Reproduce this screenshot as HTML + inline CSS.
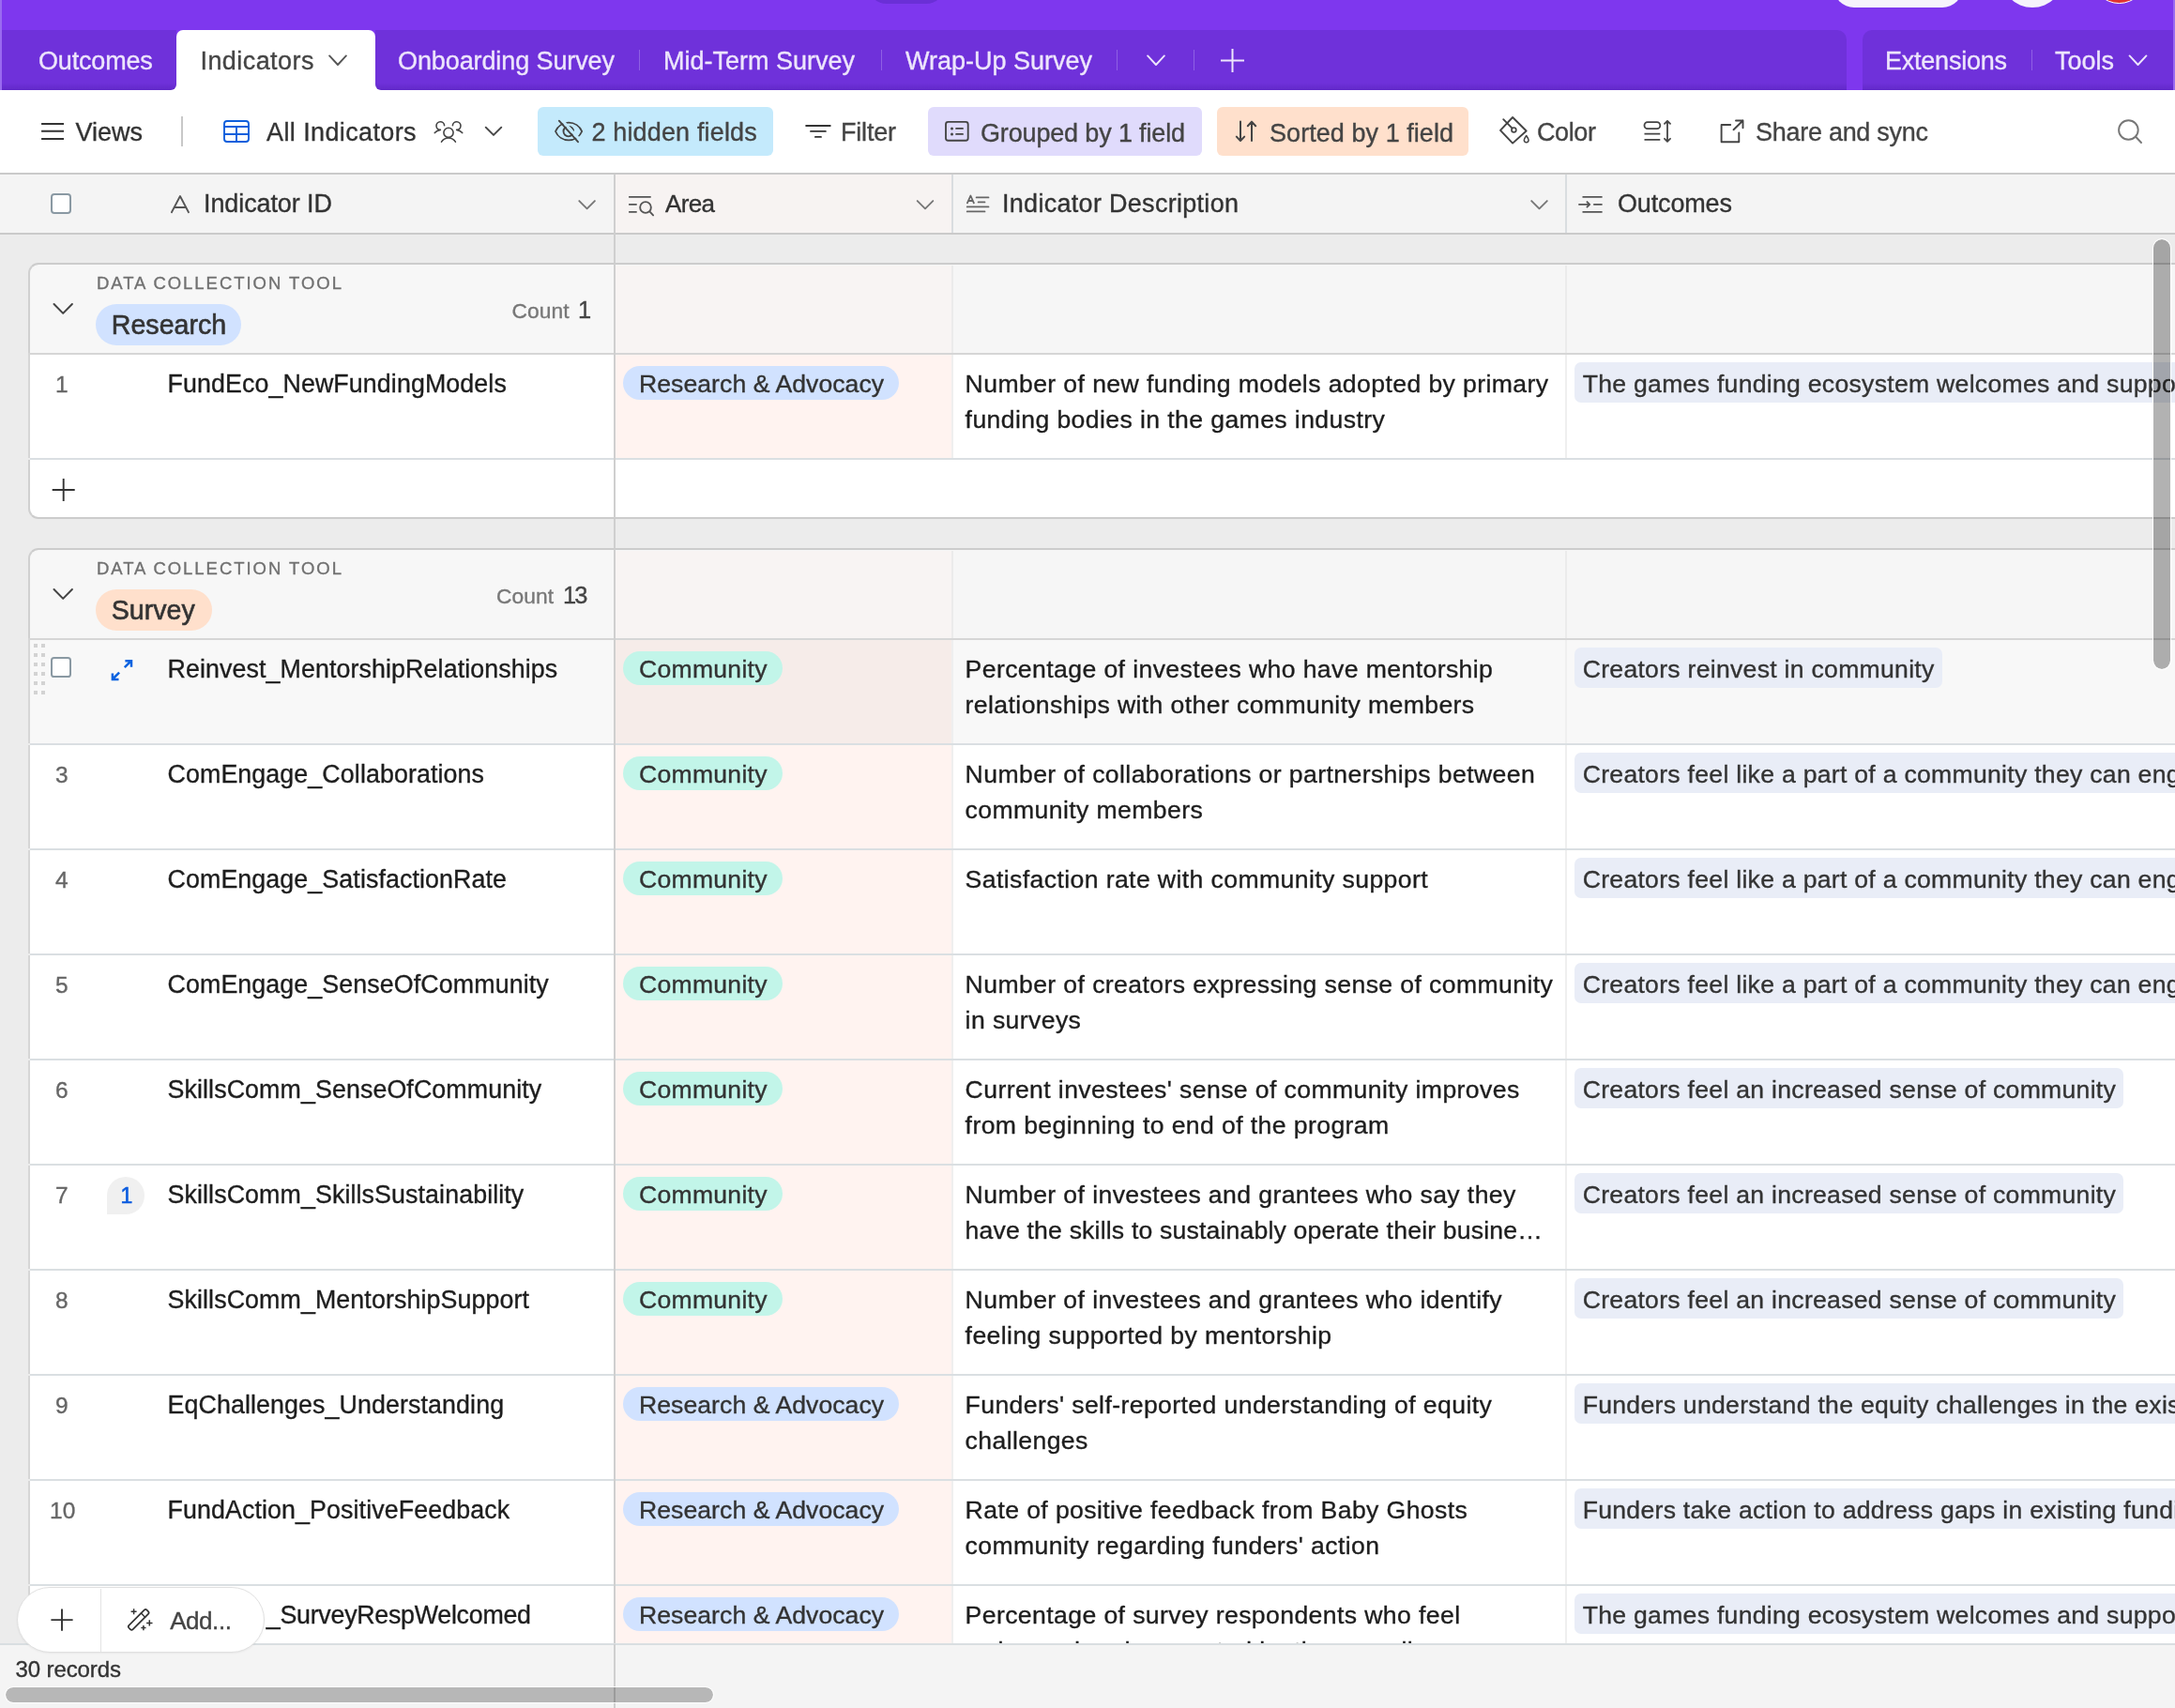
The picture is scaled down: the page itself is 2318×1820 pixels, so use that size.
<!DOCTYPE html><html><head><meta charset="utf-8"><style>
html,body{margin:0;padding:0;}
body{width:2318px;height:1820px;position:relative;overflow:hidden;background:#fff;font-family:"Liberation Sans",sans-serif;}
.t{position:absolute;white-space:nowrap;-webkit-text-stroke:0.35px currentColor;}
#wrap{position:absolute;left:0;top:0;width:2318px;height:1820px;will-change:transform;}
.r{position:absolute;}
</style></head><body><div id="wrap">
<div class="r" style="left:0px;top:0px;width:2318px;height:96px;background:#7e37ee;border-radius:0;"></div>
<div class="r" style="left:0px;top:0px;width:2px;height:96px;background:#9a6af0;border-radius:0;"></div>
<div class="r" style="left:2316px;top:0px;width:2px;height:96px;background:#9a6af0;border-radius:0;"></div>
<div class="r" style="left:925px;top:-40px;width:82px;height:43.5px;background:#6a2fd6;border-radius:20px;"></div>
<div class="r" style="left:1954px;top:-40px;width:138px;height:48px;background:#f6f3fc;border-radius:22px;"></div>
<div class="r" style="left:2131.75px;top:-60.5px;width:68.5px;height:68.5px;background:#f6f3fc;border-radius:50%;"></div>
<div class="r" style="left:2228.5px;top:-55.2px;width:59px;height:59px;background:#e0312f;border-radius:50%;border:1.6px solid #fff;box-sizing:border-box;"></div>
<div class="r" style="left:178px;top:80px;width:232px;height:16px;background:#fff;border-radius:0;"></div>
<div class="r" style="left:2px;top:32px;width:186px;height:64px;background:linear-gradient(to bottom, #6f31da 0, #6f31da 88%, #6128c8 100%);border-radius:0 0 6px 0;"></div>
<div class="r" style="left:400px;top:32px;width:1568px;height:64px;background:linear-gradient(to bottom, #6f31da 0, #6f31da 88%, #6128c8 100%);border-radius:0 10px 0 6px;"></div>
<div class="r" style="left:1985px;top:32px;width:331px;height:64px;background:linear-gradient(to bottom, #6f31da 0, #6f31da 88%, #6128c8 100%);border-radius:10px 0 0 0;"></div>
<div class="r" style="left:188px;top:32px;width:212px;height:65px;background:#fff;border-radius:7px 7px 0 0;"></div>
<div class="t" style="left:41.00px;top:48.00px;font-size:27px;line-height:35px;color:#ede5fc;letter-spacing:-0.181px;">Outcomes</div>
<div class="t" style="left:213.50px;top:48.00px;font-size:27px;line-height:35px;color:#444;letter-spacing:0.425px;">Indicators</div>
<div class="t" style="left:424.00px;top:48.00px;font-size:27px;line-height:35px;color:#ede5fc;letter-spacing:-0.102px;">Onboarding Survey</div>
<div class="r" style="left:680.5px;top:53px;width:1.6px;height:22px;background:#8f60e4;border-radius:0;"></div>
<div class="t" style="left:707.00px;top:48.00px;font-size:27px;line-height:35px;color:#ede5fc;letter-spacing:-0.001px;">Mid-Term Survey</div>
<div class="r" style="left:938.5px;top:53px;width:1.6px;height:22px;background:#8f60e4;border-radius:0;"></div>
<div class="t" style="left:965.00px;top:48.00px;font-size:27px;line-height:35px;color:#ede5fc;letter-spacing:-0.003px;">Wrap-Up Survey</div>
<div class="r" style="left:1189.5px;top:53px;width:1.6px;height:22px;background:#8f60e4;border-radius:0;"></div>
<div class="r" style="left:1271.5px;top:53px;width:1.6px;height:22px;background:#8f60e4;border-radius:0;"></div>
<div class="t" style="left:2009.00px;top:48.00px;font-size:27px;line-height:35px;color:#ede5fc;letter-spacing:-0.232px;">Extensions</div>
<div class="r" style="left:2164.5px;top:53px;width:1.6px;height:22px;background:#8f60e4;border-radius:0;"></div>
<div class="t" style="left:2190.00px;top:48.00px;font-size:27px;line-height:35px;color:#ede5fc;letter-spacing:-0.005px;">Tools</div>
<div class="t" style="left:80.50px;top:124.00px;font-size:27px;line-height:35px;color:#333;letter-spacing:-0.012px;">Views</div>
<div class="r" style="left:193.2px;top:124px;width:1.6px;height:32px;background:#c8c8c8;border-radius:0;"></div>
<div class="t" style="left:284.10px;top:124.00px;font-size:27px;line-height:35px;color:#333;letter-spacing:0.381px;">All Indicators</div>
<div class="r" style="left:573px;top:114px;width:251px;height:52px;background:#c4eafc;border-radius:6px;"></div>
<div class="t" style="left:630.40px;top:124.00px;font-size:27px;line-height:35px;color:#444;letter-spacing:0.161px;">2 hidden fields</div>
<div class="t" style="left:896.00px;top:124.00px;font-size:27px;line-height:35px;color:#444;letter-spacing:-0.199px;">Filter</div>
<div class="r" style="left:989px;top:114px;width:292px;height:52px;background:#e0dbfc;border-radius:6px;"></div>
<div class="t" style="left:1045.00px;top:124.50px;font-size:27px;line-height:35px;color:#444;letter-spacing:-0.156px;">Grouped by 1 field</div>
<div class="r" style="left:1297px;top:114px;width:268px;height:52px;background:#ffe0cc;border-radius:6px;"></div>
<div class="t" style="left:1353.00px;top:124.50px;font-size:27px;line-height:35px;color:#444;letter-spacing:0.056px;">Sorted by 1 field</div>
<div class="t" style="left:1638.00px;top:124.00px;font-size:27px;line-height:35px;color:#444;letter-spacing:-0.383px;">Color</div>
<div class="t" style="left:1871.00px;top:124.00px;font-size:27px;line-height:35px;color:#444;letter-spacing:-0.277px;">Share and sync</div>
<div class="r" style="left:0px;top:184px;width:2318px;height:2px;background:#cacaca;border-radius:0;"></div>
<div class="r" style="left:0px;top:186px;width:2318px;height:62px;background:#f4f4f4;border-radius:0;"></div>
<div class="r" style="left:656px;top:186px;width:359px;height:62px;background:#f7f3f2;border-radius:0;"></div>
<div class="r" style="left:0px;top:248px;width:2318px;height:2px;background:#cacaca;border-radius:0;"></div>
<div class="r" style="left:1014px;top:186px;width:2px;height:62px;background:#d9dde0;border-radius:0;"></div>
<div class="r" style="left:654px;top:186px;width:2px;height:64px;background:#cfcfcf;border-radius:0;"></div>
<div class="r" style="left:1668px;top:186px;width:2px;height:62px;background:#d9dde0;border-radius:0;"></div>
<div class="r" style="left:54.2px;top:206.4px;width:21.5px;height:21.5px;background:#fff;border-radius:4px;border:2px solid #8a99a3;box-sizing:border-box;"></div>
<div class="t" style="left:217.00px;top:200.30px;font-size:27px;line-height:35px;color:#333;letter-spacing:-0.098px;">Indicator ID</div>
<div class="t" style="left:709.00px;top:200.30px;font-size:26px;line-height:34px;color:#333;letter-spacing:-0.655px;">Area</div>
<div class="t" style="left:1068.00px;top:200.30px;font-size:27px;line-height:35px;color:#333;letter-spacing:0.293px;">Indicator Description</div>
<div class="t" style="left:1724.00px;top:200.30px;font-size:27px;line-height:35px;color:#333;letter-spacing:-0.152px;">Outcomes</div>
<div class="r" style="left:0px;top:250px;width:2318px;height:1502px;background:#ececec;border-radius:0;"></div>
<div class="r" style="left:654px;top:250px;width:2px;height:1502px;background:#cfcfcf;border-radius:0;"></div>
<div class="r" style="left:30px;top:280px;width:626px;height:97px;background:#f7f7f7;border-radius:11px 0 0 0;border-top:2px solid #cccccc;border-left:2px solid #d0d0d0;box-sizing:border-box;"></div>
<div class="r" style="left:656px;top:280px;width:1662px;height:97px;background:#f6f6f6;border-radius:0;border-top:2px solid #cccccc;box-sizing:border-box;"></div>
<div class="r" style="left:656px;top:283px;width:359px;height:94px;background:#f8f4f3;border-radius:0;"></div>
<div class="r" style="left:1014px;top:283px;width:2px;height:94px;background:#ebebeb;border-radius:0;"></div>
<div class="r" style="left:1668px;top:283px;width:2px;height:94px;background:#ebebeb;border-radius:0;"></div>
<div class="r" style="left:30px;top:376px;width:2288px;height:2px;background:#d6d6d6;border-radius:0;"></div>
<div class="r" style="left:654px;top:281px;width:2px;height:96px;background:#cfcfcf;border-radius:0;"></div>
<div class="t" style="left:102.90px;top:290.00px;font-size:18.5px;line-height:24px;color:#707070;letter-spacing:1.964px;">DATA COLLECTION TOOL</div>
<div class="r" style="left:102px;top:324px;width:155px;height:44px;background:#d1e2ff;border-radius:22px;"></div>
<div class="t" style="left:118.80px;top:328.00px;font-size:28.6px;line-height:37px;color:#333;-webkit-text-stroke:0.6px #333;">Research</div>
<div class="t" style="left:545.50px;top:316.00px;font-size:22.8px;line-height:30px;color:#777;letter-spacing:0.092px;">Count</div>
<div class="t" style="left:616.00px;top:314.00px;font-size:25.5px;line-height:33px;color:#444;letter-spacing:0.000px;">1</div>
<div class="r" style="left:30px;top:378px;width:624px;height:110px;background:#fff;border-radius:0;border-left:2px solid #d6d6d6;box-sizing:border-box;"></div>
<div class="r" style="left:656px;top:378px;width:1662px;height:110px;background:#fff;border-radius:0;"></div>
<div class="r" style="left:656px;top:378px;width:358px;height:110px;background:#fff3f0;border-radius:0;"></div>
<div class="r" style="left:1014px;top:378px;width:2px;height:110px;background:#efefef;border-radius:0;"></div>
<div class="r" style="left:1668px;top:378px;width:2px;height:110px;background:#efefef;border-radius:0;"></div>
<div class="r" style="left:32px;top:488px;width:2286px;height:2px;background:#dadfe2;border-radius:0;"></div>
<div class="r" style="left:654px;top:377px;width:2px;height:113px;background:#cfcfcf;border-radius:0;"></div>
<div class="t" style="left:59.00px;top:393.60px;font-size:24.5px;line-height:32px;color:#666;">1</div>
<div class="t" style="left:178.50px;top:391.60px;font-size:26.8px;line-height:35px;color:#1d1d1d;letter-spacing:0.100px;">FundEco_NewFundingModels</div>
<div class="r" style="left:664px;top:390px;width:294px;height:36px;background:#d1e2ff;border-radius:18px;"></div>
<div class="t" style="left:681.00px;top:391.60px;font-size:26.6px;line-height:35px;color:#333;letter-spacing:0.050px;">Research & Advocacy</div>
<div class="t" style="left:1028.60px;top:391.60px;font-size:26.6px;line-height:35px;color:#1d1d1d;letter-spacing:0.400px;">Number of new funding models adopted by primary</div>
<div class="t" style="left:1028.60px;top:429.60px;font-size:26.6px;line-height:35px;color:#1d1d1d;letter-spacing:0.400px;">funding bodies in the games industry</div>
<div class="r" style="left:1678.2px;top:386.4px;width:700px;height:43px;background:#e9edf7;border-radius:7px;"></div>
<div class="t" style="left:1686.70px;top:391.60px;font-size:26.6px;line-height:35px;color:#333;letter-spacing:0.280px;">The games funding ecosystem welcomes and supports</div>
<div class="r" style="left:30px;top:490px;width:2288px;height:63px;background:#fff;border-radius:0 0 0 11px;border-left:2px solid #d0d0d0;border-bottom:2px solid #cccccc;box-sizing:border-box;"></div>
<div class="r" style="left:654px;top:489px;width:2px;height:63px;background:#cfcfcf;border-radius:0;"></div>
<div class="r" style="left:30px;top:584px;width:626px;height:97px;background:#f7f7f7;border-radius:11px 0 0 0;border-top:2px solid #cccccc;border-left:2px solid #d0d0d0;box-sizing:border-box;"></div>
<div class="r" style="left:656px;top:584px;width:1662px;height:97px;background:#f6f6f6;border-radius:0;border-top:2px solid #cccccc;box-sizing:border-box;"></div>
<div class="r" style="left:656px;top:587px;width:359px;height:94px;background:#f8f4f3;border-radius:0;"></div>
<div class="r" style="left:1014px;top:587px;width:2px;height:94px;background:#ebebeb;border-radius:0;"></div>
<div class="r" style="left:1668px;top:587px;width:2px;height:94px;background:#ebebeb;border-radius:0;"></div>
<div class="r" style="left:30px;top:680px;width:2288px;height:2px;background:#d6d6d6;border-radius:0;"></div>
<div class="r" style="left:654px;top:585px;width:2px;height:96px;background:#cfcfcf;border-radius:0;"></div>
<div class="t" style="left:102.90px;top:594.00px;font-size:18.5px;line-height:24px;color:#707070;letter-spacing:1.964px;">DATA COLLECTION TOOL</div>
<div class="r" style="left:102px;top:628px;width:124px;height:44px;background:#ffe0cc;border-radius:22px;"></div>
<div class="t" style="left:118.80px;top:632.00px;font-size:28.6px;line-height:37px;color:#333;-webkit-text-stroke:0.6px #333;">Survey</div>
<div class="t" style="left:529.00px;top:620.00px;font-size:22.8px;line-height:30px;color:#777;letter-spacing:0.092px;">Count</div>
<div class="t" style="left:599.90px;top:618.00px;font-size:25.5px;line-height:33px;color:#444;letter-spacing:-1.856px;">13</div>
<div class="r" style="left:30px;top:682px;width:624px;height:110px;background:#f8f8f8;border-radius:0;border-left:2px solid #d6d6d6;box-sizing:border-box;"></div>
<div class="r" style="left:656px;top:682px;width:1662px;height:110px;background:#f8f8f8;border-radius:0;"></div>
<div class="r" style="left:656px;top:682px;width:358px;height:110px;background:#f6ece9;border-radius:0;"></div>
<div class="r" style="left:1014px;top:682px;width:2px;height:110px;background:#efefef;border-radius:0;"></div>
<div class="r" style="left:1668px;top:682px;width:2px;height:110px;background:#efefef;border-radius:0;"></div>
<div class="r" style="left:32px;top:792px;width:2286px;height:2px;background:#dadfe2;border-radius:0;"></div>
<div class="r" style="left:654px;top:681px;width:2px;height:113px;background:#cfcfcf;border-radius:0;"></div>
<div class="r" style="left:36px;top:686px;width:4px;height:4px;background:#d3d3d3;border-radius:0;"></div>
<div class="r" style="left:36px;top:696px;width:4px;height:4px;background:#d3d3d3;border-radius:0;"></div>
<div class="r" style="left:36px;top:706px;width:4px;height:4px;background:#d3d3d3;border-radius:0;"></div>
<div class="r" style="left:36px;top:716px;width:4px;height:4px;background:#d3d3d3;border-radius:0;"></div>
<div class="r" style="left:36px;top:726px;width:4px;height:4px;background:#d3d3d3;border-radius:0;"></div>
<div class="r" style="left:36px;top:736px;width:4px;height:4px;background:#d3d3d3;border-radius:0;"></div>
<div class="r" style="left:44px;top:686px;width:4px;height:4px;background:#d3d3d3;border-radius:0;"></div>
<div class="r" style="left:44px;top:696px;width:4px;height:4px;background:#d3d3d3;border-radius:0;"></div>
<div class="r" style="left:44px;top:706px;width:4px;height:4px;background:#d3d3d3;border-radius:0;"></div>
<div class="r" style="left:44px;top:716px;width:4px;height:4px;background:#d3d3d3;border-radius:0;"></div>
<div class="r" style="left:44px;top:726px;width:4px;height:4px;background:#d3d3d3;border-radius:0;"></div>
<div class="r" style="left:44px;top:736px;width:4px;height:4px;background:#d3d3d3;border-radius:0;"></div>
<div class="r" style="left:54.2px;top:700.2px;width:21.5px;height:21.5px;background:#fff;border-radius:3.6px;border:2px solid #8a99a3;box-sizing:border-box;"></div>
<div class="t" style="left:178.50px;top:695.60px;font-size:26.8px;line-height:35px;color:#1d1d1d;letter-spacing:0.100px;">Reinvest_MentorshipRelationships</div>
<div class="r" style="left:664px;top:694px;width:170px;height:36px;background:#c2f5e9;border-radius:18px;"></div>
<div class="t" style="left:681.00px;top:695.60px;font-size:26.6px;line-height:35px;color:#333;letter-spacing:0.250px;">Community</div>
<div class="t" style="left:1028.60px;top:695.60px;font-size:26.6px;line-height:35px;color:#1d1d1d;letter-spacing:0.400px;">Percentage of investees who have mentorship</div>
<div class="t" style="left:1028.60px;top:733.60px;font-size:26.6px;line-height:35px;color:#1d1d1d;letter-spacing:0.400px;">relationships with other community members</div>
<div class="r" style="left:1678.2px;top:690.4px;width:392px;height:43px;background:#e9edf7;border-radius:7px;"></div>
<div class="t" style="left:1686.70px;top:695.60px;font-size:26.6px;line-height:35px;color:#333;letter-spacing:0.280px;">Creators reinvest in community</div>
<div class="r" style="left:30px;top:794px;width:624px;height:110px;background:#fff;border-radius:0;border-left:2px solid #d6d6d6;box-sizing:border-box;"></div>
<div class="r" style="left:656px;top:794px;width:1662px;height:110px;background:#fff;border-radius:0;"></div>
<div class="r" style="left:656px;top:794px;width:358px;height:110px;background:#fff3f0;border-radius:0;"></div>
<div class="r" style="left:1014px;top:794px;width:2px;height:110px;background:#efefef;border-radius:0;"></div>
<div class="r" style="left:1668px;top:794px;width:2px;height:110px;background:#efefef;border-radius:0;"></div>
<div class="r" style="left:32px;top:904px;width:2286px;height:2px;background:#dadfe2;border-radius:0;"></div>
<div class="r" style="left:654px;top:793px;width:2px;height:113px;background:#cfcfcf;border-radius:0;"></div>
<div class="t" style="left:59.00px;top:809.60px;font-size:24.5px;line-height:32px;color:#666;">3</div>
<div class="t" style="left:178.50px;top:807.60px;font-size:26.8px;line-height:35px;color:#1d1d1d;letter-spacing:0.100px;">ComEngage_Collaborations</div>
<div class="r" style="left:664px;top:806px;width:170px;height:36px;background:#c2f5e9;border-radius:18px;"></div>
<div class="t" style="left:681.00px;top:807.60px;font-size:26.6px;line-height:35px;color:#333;letter-spacing:0.250px;">Community</div>
<div class="t" style="left:1028.60px;top:807.60px;font-size:26.6px;line-height:35px;color:#1d1d1d;letter-spacing:0.400px;">Number of collaborations or partnerships between</div>
<div class="t" style="left:1028.60px;top:845.60px;font-size:26.6px;line-height:35px;color:#1d1d1d;letter-spacing:0.400px;">community members</div>
<div class="r" style="left:1678.2px;top:802.4px;width:700px;height:43px;background:#e9edf7;border-radius:7px;"></div>
<div class="t" style="left:1686.70px;top:807.60px;font-size:26.6px;line-height:35px;color:#333;letter-spacing:0.280px;">Creators feel like a part of a community they can engage</div>
<div class="r" style="left:30px;top:906px;width:624px;height:110px;background:#fff;border-radius:0;border-left:2px solid #d6d6d6;box-sizing:border-box;"></div>
<div class="r" style="left:656px;top:906px;width:1662px;height:110px;background:#fff;border-radius:0;"></div>
<div class="r" style="left:656px;top:906px;width:358px;height:110px;background:#fff3f0;border-radius:0;"></div>
<div class="r" style="left:1014px;top:906px;width:2px;height:110px;background:#efefef;border-radius:0;"></div>
<div class="r" style="left:1668px;top:906px;width:2px;height:110px;background:#efefef;border-radius:0;"></div>
<div class="r" style="left:32px;top:1016px;width:2286px;height:2px;background:#dadfe2;border-radius:0;"></div>
<div class="r" style="left:654px;top:905px;width:2px;height:113px;background:#cfcfcf;border-radius:0;"></div>
<div class="t" style="left:59.00px;top:921.60px;font-size:24.5px;line-height:32px;color:#666;">4</div>
<div class="t" style="left:178.50px;top:919.60px;font-size:26.8px;line-height:35px;color:#1d1d1d;letter-spacing:0.100px;">ComEngage_SatisfactionRate</div>
<div class="r" style="left:664px;top:918px;width:170px;height:36px;background:#c2f5e9;border-radius:18px;"></div>
<div class="t" style="left:681.00px;top:919.60px;font-size:26.6px;line-height:35px;color:#333;letter-spacing:0.250px;">Community</div>
<div class="t" style="left:1028.60px;top:919.60px;font-size:26.6px;line-height:35px;color:#1d1d1d;letter-spacing:0.400px;">Satisfaction rate with community support</div>
<div class="r" style="left:1678.2px;top:914.4px;width:700px;height:43px;background:#e9edf7;border-radius:7px;"></div>
<div class="t" style="left:1686.70px;top:919.60px;font-size:26.6px;line-height:35px;color:#333;letter-spacing:0.280px;">Creators feel like a part of a community they can engage</div>
<div class="r" style="left:30px;top:1018px;width:624px;height:110px;background:#fff;border-radius:0;border-left:2px solid #d6d6d6;box-sizing:border-box;"></div>
<div class="r" style="left:656px;top:1018px;width:1662px;height:110px;background:#fff;border-radius:0;"></div>
<div class="r" style="left:656px;top:1018px;width:358px;height:110px;background:#fff3f0;border-radius:0;"></div>
<div class="r" style="left:1014px;top:1018px;width:2px;height:110px;background:#efefef;border-radius:0;"></div>
<div class="r" style="left:1668px;top:1018px;width:2px;height:110px;background:#efefef;border-radius:0;"></div>
<div class="r" style="left:32px;top:1128px;width:2286px;height:2px;background:#dadfe2;border-radius:0;"></div>
<div class="r" style="left:654px;top:1017px;width:2px;height:113px;background:#cfcfcf;border-radius:0;"></div>
<div class="t" style="left:59.00px;top:1033.60px;font-size:24.5px;line-height:32px;color:#666;">5</div>
<div class="t" style="left:178.50px;top:1031.60px;font-size:26.8px;line-height:35px;color:#1d1d1d;letter-spacing:0.100px;">ComEngage_SenseOfCommunity</div>
<div class="r" style="left:664px;top:1030px;width:170px;height:36px;background:#c2f5e9;border-radius:18px;"></div>
<div class="t" style="left:681.00px;top:1031.60px;font-size:26.6px;line-height:35px;color:#333;letter-spacing:0.250px;">Community</div>
<div class="t" style="left:1028.60px;top:1031.60px;font-size:26.6px;line-height:35px;color:#1d1d1d;letter-spacing:0.400px;">Number of creators expressing sense of community</div>
<div class="t" style="left:1028.60px;top:1069.60px;font-size:26.6px;line-height:35px;color:#1d1d1d;letter-spacing:0.400px;">in surveys</div>
<div class="r" style="left:1678.2px;top:1026.4px;width:700px;height:43px;background:#e9edf7;border-radius:7px;"></div>
<div class="t" style="left:1686.70px;top:1031.60px;font-size:26.6px;line-height:35px;color:#333;letter-spacing:0.280px;">Creators feel like a part of a community they can engage</div>
<div class="r" style="left:30px;top:1130px;width:624px;height:110px;background:#fff;border-radius:0;border-left:2px solid #d6d6d6;box-sizing:border-box;"></div>
<div class="r" style="left:656px;top:1130px;width:1662px;height:110px;background:#fff;border-radius:0;"></div>
<div class="r" style="left:656px;top:1130px;width:358px;height:110px;background:#fff3f0;border-radius:0;"></div>
<div class="r" style="left:1014px;top:1130px;width:2px;height:110px;background:#efefef;border-radius:0;"></div>
<div class="r" style="left:1668px;top:1130px;width:2px;height:110px;background:#efefef;border-radius:0;"></div>
<div class="r" style="left:32px;top:1240px;width:2286px;height:2px;background:#dadfe2;border-radius:0;"></div>
<div class="r" style="left:654px;top:1129px;width:2px;height:113px;background:#cfcfcf;border-radius:0;"></div>
<div class="t" style="left:59.00px;top:1145.60px;font-size:24.5px;line-height:32px;color:#666;">6</div>
<div class="t" style="left:178.50px;top:1143.60px;font-size:26.8px;line-height:35px;color:#1d1d1d;letter-spacing:0.100px;">SkillsComm_SenseOfCommunity</div>
<div class="r" style="left:664px;top:1142px;width:170px;height:36px;background:#c2f5e9;border-radius:18px;"></div>
<div class="t" style="left:681.00px;top:1143.60px;font-size:26.6px;line-height:35px;color:#333;letter-spacing:0.250px;">Community</div>
<div class="t" style="left:1028.60px;top:1143.60px;font-size:26.6px;line-height:35px;color:#1d1d1d;letter-spacing:0.400px;">Current investees' sense of community improves</div>
<div class="t" style="left:1028.60px;top:1181.60px;font-size:26.6px;line-height:35px;color:#1d1d1d;letter-spacing:0.400px;">from beginning to end of the program</div>
<div class="r" style="left:1678.2px;top:1138.4px;width:585px;height:43px;background:#e9edf7;border-radius:7px;"></div>
<div class="t" style="left:1686.70px;top:1143.60px;font-size:26.6px;line-height:35px;color:#333;letter-spacing:0.280px;">Creators feel an increased sense of community</div>
<div class="r" style="left:30px;top:1242px;width:624px;height:110px;background:#fff;border-radius:0;border-left:2px solid #d6d6d6;box-sizing:border-box;"></div>
<div class="r" style="left:656px;top:1242px;width:1662px;height:110px;background:#fff;border-radius:0;"></div>
<div class="r" style="left:656px;top:1242px;width:358px;height:110px;background:#fff3f0;border-radius:0;"></div>
<div class="r" style="left:1014px;top:1242px;width:2px;height:110px;background:#efefef;border-radius:0;"></div>
<div class="r" style="left:1668px;top:1242px;width:2px;height:110px;background:#efefef;border-radius:0;"></div>
<div class="r" style="left:32px;top:1352px;width:2286px;height:2px;background:#dadfe2;border-radius:0;"></div>
<div class="r" style="left:654px;top:1241px;width:2px;height:113px;background:#cfcfcf;border-radius:0;"></div>
<div class="t" style="left:59.00px;top:1257.60px;font-size:24.5px;line-height:32px;color:#666;">7</div>
<div class="r" style="left:114px;top:1253.8px;width:39.7px;height:40px;background:#f0f0f0;border-radius:20px 20px 20px 0;"></div>
<div class="t" style="left:128.50px;top:1259.00px;font-size:23px;line-height:30px;color:#0b5cdf;-webkit-text-stroke:0.6px #0b5cdf;">1</div>
<div class="t" style="left:178.50px;top:1255.60px;font-size:26.8px;line-height:35px;color:#1d1d1d;letter-spacing:0.100px;">SkillsComm_SkillsSustainability</div>
<div class="r" style="left:664px;top:1254px;width:170px;height:36px;background:#c2f5e9;border-radius:18px;"></div>
<div class="t" style="left:681.00px;top:1255.60px;font-size:26.6px;line-height:35px;color:#333;letter-spacing:0.250px;">Community</div>
<div class="t" style="left:1028.60px;top:1255.60px;font-size:26.6px;line-height:35px;color:#1d1d1d;letter-spacing:0.400px;">Number of investees and grantees who say they</div>
<div class="t" style="left:1028.60px;top:1293.60px;font-size:26.6px;line-height:35px;color:#1d1d1d;letter-spacing:0.180px;">have the skills to sustainably operate their busine…</div>
<div class="r" style="left:1678.2px;top:1250.4px;width:585px;height:43px;background:#e9edf7;border-radius:7px;"></div>
<div class="t" style="left:1686.70px;top:1255.60px;font-size:26.6px;line-height:35px;color:#333;letter-spacing:0.280px;">Creators feel an increased sense of community</div>
<div class="r" style="left:30px;top:1354px;width:624px;height:110px;background:#fff;border-radius:0;border-left:2px solid #d6d6d6;box-sizing:border-box;"></div>
<div class="r" style="left:656px;top:1354px;width:1662px;height:110px;background:#fff;border-radius:0;"></div>
<div class="r" style="left:656px;top:1354px;width:358px;height:110px;background:#fff3f0;border-radius:0;"></div>
<div class="r" style="left:1014px;top:1354px;width:2px;height:110px;background:#efefef;border-radius:0;"></div>
<div class="r" style="left:1668px;top:1354px;width:2px;height:110px;background:#efefef;border-radius:0;"></div>
<div class="r" style="left:32px;top:1464px;width:2286px;height:2px;background:#dadfe2;border-radius:0;"></div>
<div class="r" style="left:654px;top:1353px;width:2px;height:113px;background:#cfcfcf;border-radius:0;"></div>
<div class="t" style="left:59.00px;top:1369.60px;font-size:24.5px;line-height:32px;color:#666;">8</div>
<div class="t" style="left:178.50px;top:1367.60px;font-size:26.8px;line-height:35px;color:#1d1d1d;letter-spacing:0.100px;">SkillsComm_MentorshipSupport</div>
<div class="r" style="left:664px;top:1366px;width:170px;height:36px;background:#c2f5e9;border-radius:18px;"></div>
<div class="t" style="left:681.00px;top:1367.60px;font-size:26.6px;line-height:35px;color:#333;letter-spacing:0.250px;">Community</div>
<div class="t" style="left:1028.60px;top:1367.60px;font-size:26.6px;line-height:35px;color:#1d1d1d;letter-spacing:0.400px;">Number of investees and grantees who identify</div>
<div class="t" style="left:1028.60px;top:1405.60px;font-size:26.6px;line-height:35px;color:#1d1d1d;letter-spacing:0.400px;">feeling supported by mentorship</div>
<div class="r" style="left:1678.2px;top:1362.4px;width:585px;height:43px;background:#e9edf7;border-radius:7px;"></div>
<div class="t" style="left:1686.70px;top:1367.60px;font-size:26.6px;line-height:35px;color:#333;letter-spacing:0.280px;">Creators feel an increased sense of community</div>
<div class="r" style="left:30px;top:1466px;width:624px;height:110px;background:#fff;border-radius:0;border-left:2px solid #d6d6d6;box-sizing:border-box;"></div>
<div class="r" style="left:656px;top:1466px;width:1662px;height:110px;background:#fff;border-radius:0;"></div>
<div class="r" style="left:656px;top:1466px;width:358px;height:110px;background:#fff3f0;border-radius:0;"></div>
<div class="r" style="left:1014px;top:1466px;width:2px;height:110px;background:#efefef;border-radius:0;"></div>
<div class="r" style="left:1668px;top:1466px;width:2px;height:110px;background:#efefef;border-radius:0;"></div>
<div class="r" style="left:32px;top:1576px;width:2286px;height:2px;background:#dadfe2;border-radius:0;"></div>
<div class="r" style="left:654px;top:1465px;width:2px;height:113px;background:#cfcfcf;border-radius:0;"></div>
<div class="t" style="left:59.00px;top:1481.60px;font-size:24.5px;line-height:32px;color:#666;">9</div>
<div class="t" style="left:178.50px;top:1479.60px;font-size:26.8px;line-height:35px;color:#1d1d1d;letter-spacing:0.100px;">EqChallenges_Understanding</div>
<div class="r" style="left:664px;top:1478px;width:294px;height:36px;background:#d1e2ff;border-radius:18px;"></div>
<div class="t" style="left:681.00px;top:1479.60px;font-size:26.6px;line-height:35px;color:#333;letter-spacing:0.050px;">Research & Advocacy</div>
<div class="t" style="left:1028.60px;top:1479.60px;font-size:26.6px;line-height:35px;color:#1d1d1d;letter-spacing:0.400px;">Funders' self-reported understanding of equity</div>
<div class="t" style="left:1028.60px;top:1517.60px;font-size:26.6px;line-height:35px;color:#1d1d1d;letter-spacing:0.400px;">challenges</div>
<div class="r" style="left:1678.2px;top:1474.4px;width:700px;height:43px;background:#e9edf7;border-radius:7px;"></div>
<div class="t" style="left:1686.70px;top:1479.60px;font-size:26.6px;line-height:35px;color:#333;letter-spacing:0.280px;">Funders understand the equity challenges in the existing</div>
<div class="r" style="left:30px;top:1578px;width:624px;height:110px;background:#fff;border-radius:0;border-left:2px solid #d6d6d6;box-sizing:border-box;"></div>
<div class="r" style="left:656px;top:1578px;width:1662px;height:110px;background:#fff;border-radius:0;"></div>
<div class="r" style="left:656px;top:1578px;width:358px;height:110px;background:#fff3f0;border-radius:0;"></div>
<div class="r" style="left:1014px;top:1578px;width:2px;height:110px;background:#efefef;border-radius:0;"></div>
<div class="r" style="left:1668px;top:1578px;width:2px;height:110px;background:#efefef;border-radius:0;"></div>
<div class="r" style="left:32px;top:1688px;width:2286px;height:2px;background:#dadfe2;border-radius:0;"></div>
<div class="r" style="left:654px;top:1577px;width:2px;height:113px;background:#cfcfcf;border-radius:0;"></div>
<div class="t" style="left:53.00px;top:1593.60px;font-size:24.5px;line-height:32px;color:#666;">10</div>
<div class="t" style="left:178.50px;top:1591.60px;font-size:26.8px;line-height:35px;color:#1d1d1d;letter-spacing:0.100px;">FundAction_PositiveFeedback</div>
<div class="r" style="left:664px;top:1590px;width:294px;height:36px;background:#d1e2ff;border-radius:18px;"></div>
<div class="t" style="left:681.00px;top:1591.60px;font-size:26.6px;line-height:35px;color:#333;letter-spacing:0.050px;">Research & Advocacy</div>
<div class="t" style="left:1028.60px;top:1591.60px;font-size:26.6px;line-height:35px;color:#1d1d1d;letter-spacing:0.400px;">Rate of positive feedback from Baby Ghosts</div>
<div class="t" style="left:1028.60px;top:1629.60px;font-size:26.6px;line-height:35px;color:#1d1d1d;letter-spacing:0.400px;">community regarding funders' action</div>
<div class="r" style="left:1678.2px;top:1586.4px;width:700px;height:43px;background:#e9edf7;border-radius:7px;"></div>
<div class="t" style="left:1686.70px;top:1591.60px;font-size:26.6px;line-height:35px;color:#333;letter-spacing:0.280px;">Funders take action to address gaps in existing funding</div>
<div class="r" style="left:30px;top:1690px;width:624px;height:110px;background:#fff;border-radius:0;border-left:2px solid #d6d6d6;box-sizing:border-box;"></div>
<div class="r" style="left:656px;top:1690px;width:1662px;height:110px;background:#fff;border-radius:0;"></div>
<div class="r" style="left:656px;top:1690px;width:358px;height:110px;background:#fff3f0;border-radius:0;"></div>
<div class="r" style="left:1014px;top:1690px;width:2px;height:110px;background:#efefef;border-radius:0;"></div>
<div class="r" style="left:1668px;top:1690px;width:2px;height:110px;background:#efefef;border-radius:0;"></div>
<div class="r" style="left:32px;top:1800px;width:2286px;height:2px;background:#dadfe2;border-radius:0;"></div>
<div class="r" style="left:654px;top:1689px;width:2px;height:113px;background:#cfcfcf;border-radius:0;"></div>
<div class="t" style="left:53.00px;top:1705.60px;font-size:24.5px;line-height:32px;color:#666;">11</div>
<div class="t" style="left:283.83px;top:1703.60px;font-size:26.8px;line-height:35px;color:#1d1d1d;letter-spacing:-0.267px;">_SurveyRespWelcomed</div>
<div class="r" style="left:664px;top:1702px;width:294px;height:36px;background:#d1e2ff;border-radius:18px;"></div>
<div class="t" style="left:681.00px;top:1703.60px;font-size:26.6px;line-height:35px;color:#333;letter-spacing:0.050px;">Research & Advocacy</div>
<div class="t" style="left:1028.60px;top:1703.60px;font-size:26.6px;line-height:35px;color:#1d1d1d;letter-spacing:0.400px;">Percentage of survey respondents who feel</div>
<div class="t" style="left:1028.60px;top:1741.60px;font-size:26.6px;line-height:35px;color:#1d1d1d;letter-spacing:0.400px;">welcomed and supported by the overall</div>
<div class="r" style="left:1678.2px;top:1698.4px;width:700px;height:43px;background:#e9edf7;border-radius:7px;"></div>
<div class="t" style="left:1686.70px;top:1703.60px;font-size:26.6px;line-height:35px;color:#333;letter-spacing:0.280px;">The games funding ecosystem welcomes and supports</div>
<svg class="r" style="left:0;top:0" width="2318" height="1820" viewBox="0 0 2318 1820" fill="none" stroke-linecap="round" stroke-linejoin="round"><path d="M351.1 59.400000000000006 L360 69.0 L368.9 59.400000000000006" stroke="#555" stroke-width="1.9" /><path d="M1223.1 59.400000000000006 L1232 69.0 L1240.9 59.400000000000006" stroke="#ede5fc" stroke-width="1.9" /><path d="M1313.5 52 V77 M1301 64.5 H1326" stroke="#ede5fc" stroke-width="2.0" stroke-linecap="butt"/><path d="M2269.6 59.400000000000006 L2278.5 69.0 L2287.4 59.400000000000006" stroke="#ede5fc" stroke-width="1.9" /><path d="M44.1 131.9 H68 M44.1 139.8 H68 M44.1 148 H68" stroke="#333" stroke-width="2.0" stroke-linecap="butt"/><rect x="239" y="129" width="26" height="22" rx="3" stroke="#0e5fdc" stroke-width="1.9"/><path d="M239 135 H265 M239 143 H265 M252 135 V151" stroke="#0e5fdc" stroke-width="1.9" stroke-linecap="butt"/><circle cx="478" cy="141.3" r="5.1" stroke="#444" stroke-width="1.6"/><path d="M470.5 151.2 A8.7 8.7 0 0 1 485.4 151.2" stroke="#444" stroke-width="1.6" /><path d="M473.6 133.6 A4.3 4.3 0 1 0 468.9 138.3 M469.4 138.4 Q465.5 139 463.3 141.6" stroke="#444" stroke-width="1.6" /><path d="M482.4 133.6 A4.3 4.3 0 1 1 487.1 138.3 M486.6 138.4 Q490.5 139 492.7 141.6" stroke="#444" stroke-width="1.6" /><path d="M517.7 135.65 L526 143.95000000000002 L534.3 135.65" stroke="#444" stroke-width="1.9" /><path d="M592 140 A15.3 15.3 0 0 1 620.2 140 A15.3 15.3 0 0 1 592 140 Z" stroke="#444" stroke-width="1.85" /><circle cx="605.8" cy="140" r="5.3" stroke="#444" stroke-width="1.85"/><path d="M598.3 127.2 L619 150.2" stroke="#c4eafc" stroke-width="3.2" /><path d="M595.8 128.7 L616 151.2" stroke="#444" stroke-width="1.9" /><path d="M859.1 134 H884.8 M864 139.9 H879.9 M868.9 145.9 H875" stroke="#333" stroke-width="1.8" /><rect x="1008" y="129.9" width="23.7" height="19.9" rx="2.5" stroke="#444" stroke-width="1.85"/><circle cx="1014.5" cy="136.9" r="1.5" fill="#444"/><circle cx="1014.5" cy="142.9" r="1.5" fill="#444"/><path d="M1019.1 136.9 H1026 M1019.1 142.9 H1026" stroke="#444" stroke-width="1.85" /><path d="M1322 129.6 V150 M1317.8 145.6 L1322 150 L1326.2 145.6 M1334 150 V129.8 M1329.8 134.2 L1334 129.8 L1338.2 134.2" stroke="#444" stroke-width="2.0" /><path d="M1612.1 125 L1626.7 139.5 L1612.1 152.6 L1599 138.8 Z" stroke="#444" stroke-width="1.9" /><path d="M1602.2 127.2 L1611.6 136.6" stroke="#444" stroke-width="1.9" /><circle cx="1613.4" cy="138.4" r="2.4" stroke="#444" stroke-width="1.7"/><path d="M1626.7 144.5 Q1624.3 148 1624.3 149.3 A2.4 2.4 0 0 0 1629.1 149.3 Q1629.1 148 1626.7 144.5 Z" stroke="#444" stroke-width="1.5" /><rect x="1752.5" y="130.2" width="16.8" height="6.9" rx="3.4" stroke="#444" stroke-width="1.8"/><path d="M1752.5 142.7 H1769.3 M1752.5 148.9 H1769.3" stroke="#444" stroke-width="1.8" stroke-linecap="butt"/><path d="M1777 129 V150.5 M1774 131.8 L1777 128.8 L1780 131.8 M1774 147.8 L1777 150.8 L1780 147.8" stroke="#444" stroke-width="1.8" /><path d="M1844.2 133 H1834.6 V151.3 H1853.3 V141.4" stroke="#444" stroke-width="1.9" /><path d="M1847.5 138.2 L1857.5 128.5 M1850 128.5 H1857.5 V136.2" stroke="#444" stroke-width="1.9" /><circle cx="2268.4" cy="138.5" r="10.3" stroke="#777" stroke-width="1.9"/><path d="M2276.4 146 L2282 152" stroke="#777" stroke-width="1.9" /><path d="M182.9 226.2 L191.95 209 L201 226.2 M185.9 221 H198" stroke="#555" stroke-width="1.85" /><path d="M617.3000000000001 214.04999999999998 L625.6 222.35 L633.9 214.04999999999998" stroke="#777" stroke-width="1.9" /><path d="M670.1 209.9 H693.7 M670.1 217.9 H678.7 M670.1 225.9 H678.7" stroke="#555" stroke-width="1.87" stroke-linecap="butt"/><circle cx="688" cy="221" r="5.85" stroke="#555" stroke-width="1.87"/><path d="M692.6 225.6 L696.1 229.4" stroke="#555" stroke-width="1.87" /><path d="M977.7 214.04999999999998 L986 222.35 L994.3 214.04999999999998" stroke="#777" stroke-width="1.9" /><path d="M1030.9 216.3 L1034.4 208.5 L1037.9 216.3 M1032 214 H1036.8" stroke="#666" stroke-width="1.8" /><path d="M1040.6 210.4 H1053.5 M1042.6 215.4 H1049.5 M1030.7 220.4 H1053.5 M1030.7 225.4 H1049.5" stroke="#666" stroke-width="1.75" /><path d="M1632.2 214.04999999999998 L1640.5 222.35 L1648.8 214.04999999999998" stroke="#777" stroke-width="1.9" /><path d="M1686.5 209.9 H1707.6 M1698.2 217.9 H1707.6 M1682.3 217.9 H1693.7 M1690.9 214.6 L1694.2 217.9 L1690.9 221.2 M1686.5 225.9 H1707.6" stroke="#555" stroke-width="1.87" stroke-linecap="butt"/><path d="M57.5 323.95 L67.2 333.84999999999997 L76.9 323.95" stroke="#444" stroke-width="2.0" /><path d="M67.7 510 V534 M55.7 522 H79.7" stroke="#333" stroke-width="1.9" stroke-linecap="butt"/><path d="M57.5 627.9499999999999 L67.2 637.85 L76.9 627.9499999999999" stroke="#444" stroke-width="2.0" /><path d="M132.8 711.2 L139.6 704.4 M133.4 704.2 H140 V710.8 M127.1 716.6 L120.3 723.4 M119.9 717.6 V724 H126.5" stroke="#0b63e0" stroke-width="2.5" stroke-linecap="butt" stroke-linejoin="miter"/></svg>
<div class="r" style="left:0px;top:1752px;width:2318px;height:68px;background:#f4f4f4;border-radius:0;"></div>
<div class="r" style="left:0px;top:1751px;width:2318px;height:2px;background:#d9dee1;border-radius:0;"></div>
<div class="r" style="left:654px;top:1752px;width:2px;height:68px;background:#cfcfcf;border-radius:0;"></div>
<div class="t" style="left:16.50px;top:1763.00px;font-size:24px;line-height:31px;color:#333;letter-spacing:-0.097px;">30 records</div>
<div class="r" style="left:5px;top:1796.5px;width:756px;height:18px;background:rgba(0,0,0,0.25);border-radius:9px;border:1px solid rgba(255,255,255,0.9);box-sizing:border-box;background-clip:padding-box;"></div>
<div class="r" style="left:17.5px;top:1691.4px;width:264px;height:70px;background:#fff;border-radius:35px;border:1.6px solid #e0e0e0;box-sizing:border-box;box-shadow:0 1px 2px rgba(0,0,0,0.05);"></div>
<div class="r" style="left:106.5px;top:1693px;width:1.6px;height:67px;background:#e4e4e4;border-radius:0;"></div>
<svg class="r" style="left:0;top:0" width="2318" height="1820" viewBox="0 0 2318 1820" fill="none" stroke-linecap="round" stroke-linejoin="round"><path d="M66 1714.4 V1737.8 M54.4 1726.1 H77.6" stroke="#333" stroke-width="1.9" stroke-linecap="butt"/><g transform="rotate(-45 147.7 1725.9)"><rect x="134.2" y="1722.9" width="27" height="6" rx="2" stroke="#333" stroke-width="1.7"/><path d="M154.5 1722.9 V1728.9" stroke="#333" stroke-width="1.5"/></g><path d="M142.6 1714.2 V1720.2 M139.6 1717.2 H145.6 M159.3 1726.2 V1732.6 M156.1 1729.4 H162.5 M152.9 1732 V1737.2 M150.3 1734.6 H155.5" stroke="#333" stroke-width="1.5" stroke-linecap="butt"/></svg>
<div class="t" style="left:181.20px;top:1709.80px;font-size:26px;line-height:34px;color:#444;letter-spacing:-0.442px;">Add...</div>
<div class="r" style="left:2294px;top:254px;width:20px;height:460px;background:rgba(0,0,0,0.3);border-radius:10px;border:1.5px solid rgba(255,255,255,0.9);box-sizing:border-box;background-clip:padding-box;"></div>
</div></body></html>
